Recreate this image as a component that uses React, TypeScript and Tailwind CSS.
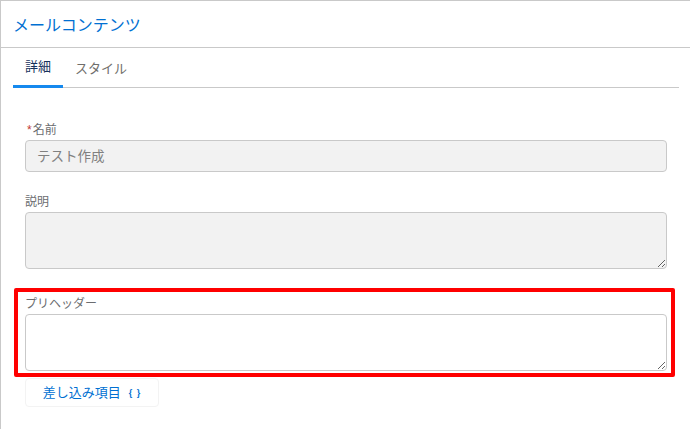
export default function App() {
  return (
    <div className="relative h-[429px] w-[690px] overflow-hidden border-t border-l border-[#c9c9c9] bg-white font-['Liberation_Sans','Noto_Sans_CJK_JP',sans-serif]">
      {/* Card header */}
      <header className="flex h-[47px] items-center border-b border-[#c9c9c9] pt-[3px] pl-3">
        <h1 className="text-base font-normal text-[#0070d2]">メールコンテンツ</h1>
      </header>

      {/* Tabs */}
      <nav className="mr-[11px] ml-3 flex h-10 border-b border-[#c9c9c9] text-[13px]">
        <div className="flex h-10 w-[50px] items-center justify-center border-b-[3px] border-[#1589ee] pt-px text-[#16325c]">詳細</div>
        <div className="flex h-10 w-[76px] items-center justify-center pt-px text-[#706e6b]">スタイル</div>
      </nav>

      {/* Form */}
      <div className="flex flex-col pt-[34px] pl-6 text-xs text-[#54698d]">
        <label className="flex h-[18px] items-center pb-[2px] text-[#6b6d70]">
          <span className="mr-px pl-[2px] text-[#c23934]">*</span>名前
        </label>
        <input
          disabled
          value="テスト作成"
          className="h-8 w-[642px] rounded border border-[#c9c9c9] bg-[#f2f2f2] px-[11px] pb-[2px] text-[13.5px] text-[#80807f]"
        />

        <label className="mt-[22px] flex h-[18px] items-center pb-[2px] text-[#6b6d70]">説明</label>
        <textarea disabled className="h-[57px] w-[642px] rounded border border-[#c9c9c9] bg-[#f2f2f2]" />

        <label className="mt-[26px] flex h-[19px] items-center pb-[2px] text-[#6b6d70]">プリヘッダー</label>
        <textarea className="h-[57px] w-[642px] rounded border border-[#c9c9c9] bg-white" />

        <button className="mt-[7px] flex h-[29px] w-[134px] items-center justify-center gap-2 rounded border border-[#f3f3f3] bg-white text-[13px] text-[#0070d2]">
          差し込み項目
          <span className="text-[9px] font-bold tracking-[1px]">{'{ }'}</span>
        </button>
      </div>

      {/* Red highlight drawn over the screenshot */}
      <div className="absolute top-[287px] left-[13px] h-[89px] w-[661px] rounded-[2px] border-4 border-[#ff0000]" />
    </div>
  );
}
